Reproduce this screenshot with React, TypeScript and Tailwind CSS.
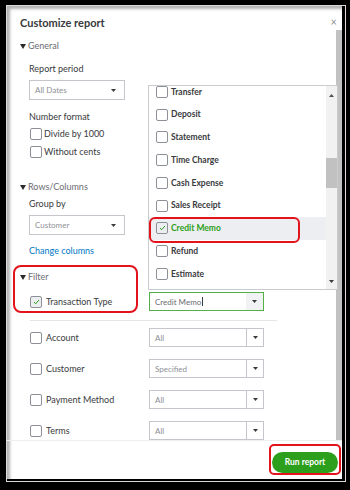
import React from "react";

const Tri = () => (
  <svg width="6" height="5" viewBox="0 0 6 5" className="shrink-0">
    <path d="M0 0H6L3 5Z" fill="#2b2b2b" />
  </svg>
);

const Caret = () => (
  <svg width="5" height="3" viewBox="0 0 5 3">
    <path d="M0 0H5L2.5 3Z" fill="#393a3d" />
  </svg>
);

const UpArrow = () => (
  <svg width="5" height="3" viewBox="0 0 5 3">
    <path d="M0 3H5L2.5 0Z" fill="#505050" />
  </svg>
);

function Checkbox({ checked }: { checked?: boolean }) {
  return (
    <div
      className={`w-[12px] h-[12px] shrink-0 border border-[#8d9096] rounded-[2px] flex items-center justify-center ${
        checked ? "bg-[#eceef1]" : "bg-white"
      }`}
    >
      {checked && (
        <svg width="7" height="6" viewBox="0 0 7 6">
          <path d="M1 3l1.7 1.8L6 1" stroke="#2ca01c" strokeWidth="1" fill="none" />
        </svg>
      )}
    </div>
  );
}

function PlainSelect({ value }: { value: string }) {
  return (
    <div className="ml-[9px] w-[96px] h-[20px] border border-[#c4c6cb] flex items-center justify-between pl-[5px] pr-[8px]">
      <span className="text-[8px] text-[#8d9096]">{value}</span>
      <Caret />
    </div>
  );
}

function SplitSelect({ value, focus }: { value: string; focus?: boolean }) {
  return (
    <div
      className={`w-[115px] h-[19px] flex ${
        focus ? "border border-[#53b046]" : "border border-[#c4c6cb]"
      }`}
    >
      <div className="flex-1 flex items-center pl-[5px]">
        <span className={`text-[8px] ${focus ? "text-[#6b6c72]" : "text-[#8d9096]"}`}>{value}</span>
        {focus && <span className="w-px h-[9px] bg-[#393a3d] ml-px" />}
      </div>
      <div
        className={`w-[17px] flex items-center justify-center ${
          focus ? "bg-[#f1f2f4]" : "border-l border-[#c4c6cb]"
        }`}
      >
        <Caret />
      </div>
    </div>
  );
}

function FilterRow({ label, value, mt }: { label: string; value: string; mt: string }) {
  return (
    <div className={`flex items-center h-[19px] ${mt}`}>
      <div className="w-[129px] pl-[10px] flex items-center gap-[4px]">
        <Checkbox />
        <span className="text-[9px] text-[#393a3d]">{label}</span>
      </div>
      <SplitSelect value={value} />
    </div>
  );
}

const listItems = [
  "Transfer",
  "Deposit",
  "Statement",
  "Time Charge",
  "Cash Expense",
  "Sales Receipt",
  "Credit Memo",
  "Refund",
  "Estimate",
];

export default function App() {
  return (
    <div className="w-[350px] h-[490px] bg-black pl-[6px] pt-[5px] pr-[4px] pb-[8px] font-['Lato',sans-serif]">
      <div className="w-full h-full border border-[#d9d9d9] pr-[3px] pb-[2px]">
        <div className="relative w-full h-full bg-white shadow-[inset_3px_3px_3px_rgba(0,0,0,0.3)] flex flex-col overflow-hidden">
          {/* header */}
          <div className="h-[24px] shrink-0 flex items-start justify-between pl-[13px] pr-[5px] pt-[10px]">
            <span className="text-[11px] leading-[14px] font-bold text-[#393a3d]">Customize report</span>
            <span className="text-[11px] leading-[12px] text-[#8d9096]">×</span>
          </div>

          {/* body */}
          <div className="flex-1 flex min-h-0">
            <div className="flex-1 overflow-hidden pl-[13px]">
              <div className="mt-[10px] h-[12px] flex items-center gap-[2px]">
                <Tri />
                <span className="text-[9px] text-[#6b6c72]">General</span>
              </div>
              <div className="mt-[11px] h-[12px] pl-[9px] flex items-center text-[9px] text-[#393a3d]">Report period</div>
              <div className="mt-[5px]">
                <PlainSelect value="All Dates" />
              </div>
              <div className="mt-[11px] h-[12px] pl-[9px] flex items-center text-[9px] text-[#393a3d]">Number format</div>
              <div className="mt-[2px] h-[18px] pl-[10px] flex items-center gap-[2px]">
                <Checkbox />
                <span className="text-[9px] text-[#393a3d]">Divide by 1000</span>
              </div>
              <div className="h-[18px] pl-[10px] flex items-center gap-[2px]">
                <Checkbox />
                <span className="text-[9px] text-[#393a3d]">Without cents</span>
              </div>
              <div className="mt-[20px] h-[12px] flex items-center gap-[2px]">
                <Tri />
                <span className="text-[9px] text-[#6b6c72]">Rows/Columns</span>
              </div>
              <div className="mt-[5px] h-[12px] pl-[9px] flex items-center text-[9px] text-[#393a3d]">Group by</div>
              <div className="mt-[5px]">
                <PlainSelect value="Customer" />
              </div>
              <div className="mt-[10px] h-[12px] pl-[9px] flex items-center text-[9px] text-[#0077c5]">Change columns</div>
              <div className="mt-[14px] h-[12px] flex items-center gap-[2px]">
                <Tri />
                <span className="text-[9px] text-[#6b6c72]">Filter</span>
              </div>
              <div className="mt-[9px] flex items-center h-[19px]">
                <div className="w-[129px] pl-[10px] flex items-center gap-[4px]">
                  <Checkbox checked />
                  <span className="text-[9px] text-[#393a3d]">Transaction Type</span>
                </div>
                <SplitSelect value="Credit Memo" focus />
              </div>
              <div className="mt-[9px] ml-[10px] w-[247px] h-px bg-[#e3e5e8]" />
              <FilterRow label="Account" value="All" mt="mt-[7px]" />
              <FilterRow label="Customer" value="Specified" mt="mt-[12px]" />
              <FilterRow label="Payment Method" value="All" mt="mt-[12px]" />
              <FilterRow label="Terms" value="All" mt="mt-[12px]" />
            </div>
            <div className="w-[6px] bg-[#c2c2c2]" />
          </div>

          {/* footer */}
          <div className="h-[39px] shrink-0 border-t border-[#eceef1] flex justify-end items-start pt-[11px] pr-[4px]">
            <button className="w-[66px] h-[21px] rounded-full bg-[#2ca01c] text-white text-[8.5px] font-bold">
              Run report
            </button>
          </div>

          {/* dropdown list overlay */}
          <div className="absolute left-[141px] top-[79px] w-[190px] h-[205px] border border-[#c9cbcf] bg-white flex overflow-hidden">
            <div className="flex-1 overflow-hidden">
              <div className="-mt-[5.4px]">
                {listItems.map((item) => {
                  const active = item === "Credit Memo";
                  return (
                    <div
                      key={item}
                      className={`h-[22.75px] flex items-center pl-[7px] gap-[3px] ${
                        active ? "bg-[#eceef1]" : "bg-white"
                      }`}
                    >
                      <Checkbox checked={active} />
                      <span
                        className={`text-[8.5px] font-bold ${
                          active ? "text-[#2ca01c]" : "text-[#393a3d]"
                        }`}
                      >
                        {item}
                      </span>
                    </div>
                  );
                })}
              </div>
            </div>
            <div className="w-[11px] bg-[#f1f1f1] flex flex-col items-center">
              <div className="mt-[8px]">
                <UpArrow />
              </div>
              <div className="mt-[61px] w-full h-[30px] bg-[#c1c1c1]" />
              <div className="flex-1" />
              <div className="mb-[6px]">
                <Caret />
              </div>
            </div>
          </div>

          {/* annotation outlines */}
          <div className="absolute left-[142px] top-[211px] w-[151px] h-[26px] border-2 border-[#e3131b] rounded-[6px]" />
          <div className="absolute left-[6px] top-[259px] w-[125px] h-[48px] border-2 border-[#e3131b] rounded-[8px]" />
          <div className="absolute left-[262px] top-[438px] w-[72px] h-[31px] border-2 border-[#e3131b] rounded-[5px]" />
        </div>
      </div>
    </div>
  );
}
